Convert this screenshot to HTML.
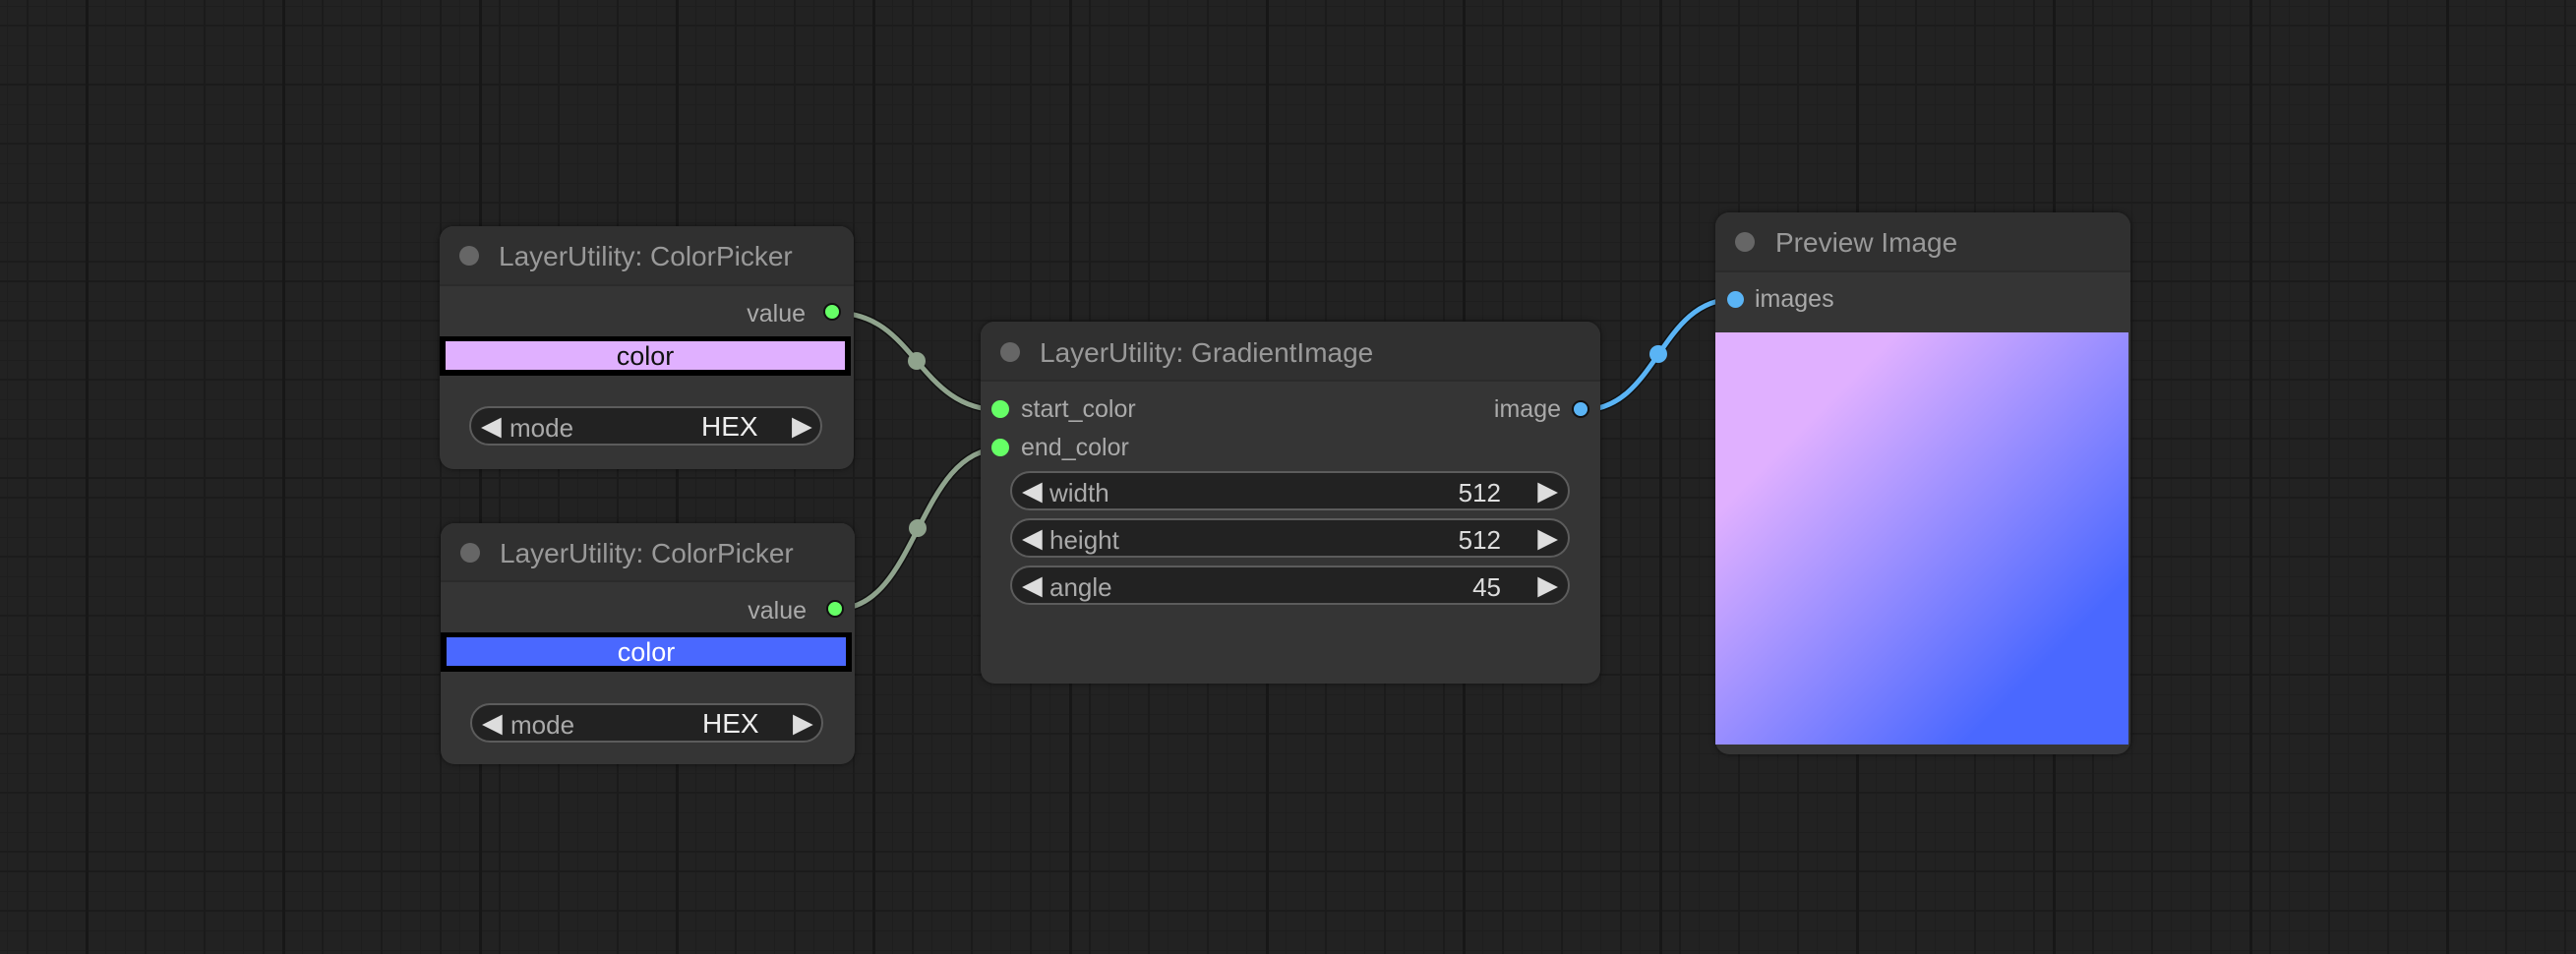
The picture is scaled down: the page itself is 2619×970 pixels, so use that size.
<!DOCTYPE html>
<html><head><meta charset="utf-8"><style>
*{margin:0;padding:0;box-sizing:border-box}
body{width:2619px;height:970px;overflow:hidden;background:#222;position:relative;font-family:"Liberation Sans",Arial,sans-serif}
.grid{position:absolute;inset:0;
background-image:
linear-gradient(90deg,#171717 0 3px,transparent 3px),
linear-gradient(0deg,#1b1b1b 0 2px,transparent 2px),
linear-gradient(90deg,#1b1b1b 0 2px,transparent 2px),
linear-gradient(0deg,#1c1c1c 0 2px,transparent 2px),
linear-gradient(90deg,#1e1e1e 0 1px,transparent 1px),
linear-gradient(0deg,#1e1e1e 0 1px,transparent 1px);
background-size:200px 200px,200px 200px,60px 60px,60px 60px,20px 20px,20px 20px;
background-position:87px 87px,87px 87px,27px 27px,27px 27px,7px 7px,7px 7px}
.node{position:absolute;background:#353535;border-radius:14px;box-shadow:0 0 6px rgba(0,0,0,.5)}
.title{position:absolute;left:0;right:0;top:0;background:#303030;border-radius:14px 14px 0 0;border-bottom:2px solid #2b2b2b}
.dot{position:absolute;width:20px;height:20px;border-radius:50%}
.tdot{background:#666}
.gdot{background:#6f6;border:2px solid #111}
.bdot{background:#5ab4f5;border:2px solid #111}
.t{position:absolute;white-space:nowrap;color:#999;font-size:28px;line-height:1}
.l{position:absolute;white-space:nowrap;color:#aaa;font-size:25px;line-height:1}
.w{position:absolute;background:#222;border:2px solid #5c5c5c;border-radius:22px;height:40px}
.w .a{position:absolute;top:5px;color:#ddd;font-size:27px;line-height:1}
.w .n{position:absolute;top:7px;color:#aaa;font-size:26px;line-height:1}
.w .v{position:absolute;top:7px;color:#ddd;font-size:26px;line-height:1}
.bar{position:absolute;background:#000}
.bar div{position:absolute;left:6px;right:6px;top:5px;bottom:6px;text-align:center;font-size:27px;line-height:30px}
</style></head><body>
<div class="grid"></div>

<svg style="position:absolute;left:0;top:0" width="2619" height="970">
<g fill="none" stroke-linecap="round">
<path d="M849 318 C932 318,932 417,1018 417" stroke="#111" stroke-width="8"/>
<path d="M849 318 C932 318,932 417,1018 417" stroke="#8fa38d" stroke-width="5"/>
<path d="M851 619 C933 619,933 456,1018 456" stroke="#111" stroke-width="8"/>
<path d="M851 619 C933 619,933 456,1018 456" stroke="#8fa38d" stroke-width="5"/>
<path d="M1608 417 C1686 417,1686 304,1764 304" stroke="#111" stroke-width="8"/>
<path d="M1608 417 C1686 417,1686 304,1764 304" stroke="#5ab4f5" stroke-width="5"/>
</g>
<circle cx="932" cy="367" r="9" fill="#8fa38d"/>
<circle cx="933" cy="537" r="9" fill="#8fa38d"/>
<circle cx="1686" cy="360" r="9" fill="#5ab4f5"/>
</svg>

<!-- node1 -->
<div class="node" style="left:447px;top:230px;width:421px;height:247px">
<div class="title" style="height:61px"></div>
<div class="dot tdot" style="left:20px;top:20px"></div>
<div class="t" style="left:60px;top:17px">LayerUtility: ColorPicker</div>
<div class="l" style="right:49px;top:77px">value</div>
<div class="dot gdot" style="left:390px;top:78px;width:18px;height:18px"></div>
<div class="bar" style="left:0;top:112px;width:418px;height:40px"><div style="background:#e0b0ff;color:#111">color</div></div>
<div class="w" style="left:30px;top:183px;width:359px"><span class="a" style="left:10px">◀</span><span class="n" style="left:39px">mode</span><span class="v" style="left:234px;color:#eee;font-size:28px;top:5px">HEX</span><span class="a" style="left:326px">▶</span></div>
</div>

<!-- node2 -->
<div class="node" style="left:448px;top:532px;width:421px;height:245px">
<div class="title" style="height:60px"></div>
<div class="dot tdot" style="left:20px;top:20px"></div>
<div class="t" style="left:60px;top:17px">LayerUtility: ColorPicker</div>
<div class="l" style="right:49px;top:77px">value</div>
<div class="dot gdot" style="left:392px;top:78px;width:18px;height:18px"></div>
<div class="bar" style="left:0;top:111px;width:418px;height:40px"><div style="background:#4a68ff;color:#fff">color</div></div>
<div class="w" style="left:30px;top:183px;width:359px"><span class="a" style="left:10px">◀</span><span class="n" style="left:39px">mode</span><span class="v" style="left:234px;color:#eee;font-size:28px;top:5px">HEX</span><span class="a" style="left:326px">▶</span></div>
</div>

<!-- node3 -->
<div class="node" style="left:997px;top:327px;width:630px;height:368px">
<div class="title" style="height:61px"></div>
<div class="dot tdot" style="left:20px;top:21px"></div>
<div class="t" style="left:60px;top:18px">LayerUtility: GradientImage</div>
<div class="dot gdot" style="left:11px;top:80px;width:18px;height:18px;border:none"></div>
<div class="l" style="left:41px;top:77px">start_color</div>
<div class="dot gdot" style="left:11px;top:119px;width:18px;height:18px;border:none"></div>
<div class="l" style="left:41px;top:116px">end_color</div>
<div class="l" style="right:40px;top:77px">image</div>
<div class="dot bdot" style="left:601px;top:80px;width:18px;height:18px"></div>
<div class="w" style="left:30px;top:152px;width:569px"><span class="a" style="left:10px">◀</span><span class="n" style="left:38px">width</span><span class="v" style="right:68px">512</span><span class="a" style="right:10px">▶</span></div>
<div class="w" style="left:30px;top:200px;width:569px"><span class="a" style="left:10px">◀</span><span class="n" style="left:38px">height</span><span class="v" style="right:68px">512</span><span class="a" style="right:10px">▶</span></div>
<div class="w" style="left:30px;top:248px;width:569px"><span class="a" style="left:10px">◀</span><span class="n" style="left:38px">angle</span><span class="v" style="right:68px">45</span><span class="a" style="right:10px">▶</span></div>
</div>

<!-- node4 -->
<div class="node" style="left:1744px;top:216px;width:422px;height:551px">
<div class="title" style="height:61px"></div>
<div class="dot tdot" style="left:20px;top:20px"></div>
<div class="t" style="left:61px;top:17px">Preview Image</div>
<div class="dot" style="left:12px;top:80px;width:17px;height:17px;background:#5ab4f5"></div>
<div class="l" style="left:40px;top:76px">images</div>
<div style="position:absolute;left:0;top:122px;width:420px;height:419px;background:linear-gradient(135deg,#e0b0ff 22%,#4a68ff 80%)"></div>
</div>
</body></html>
